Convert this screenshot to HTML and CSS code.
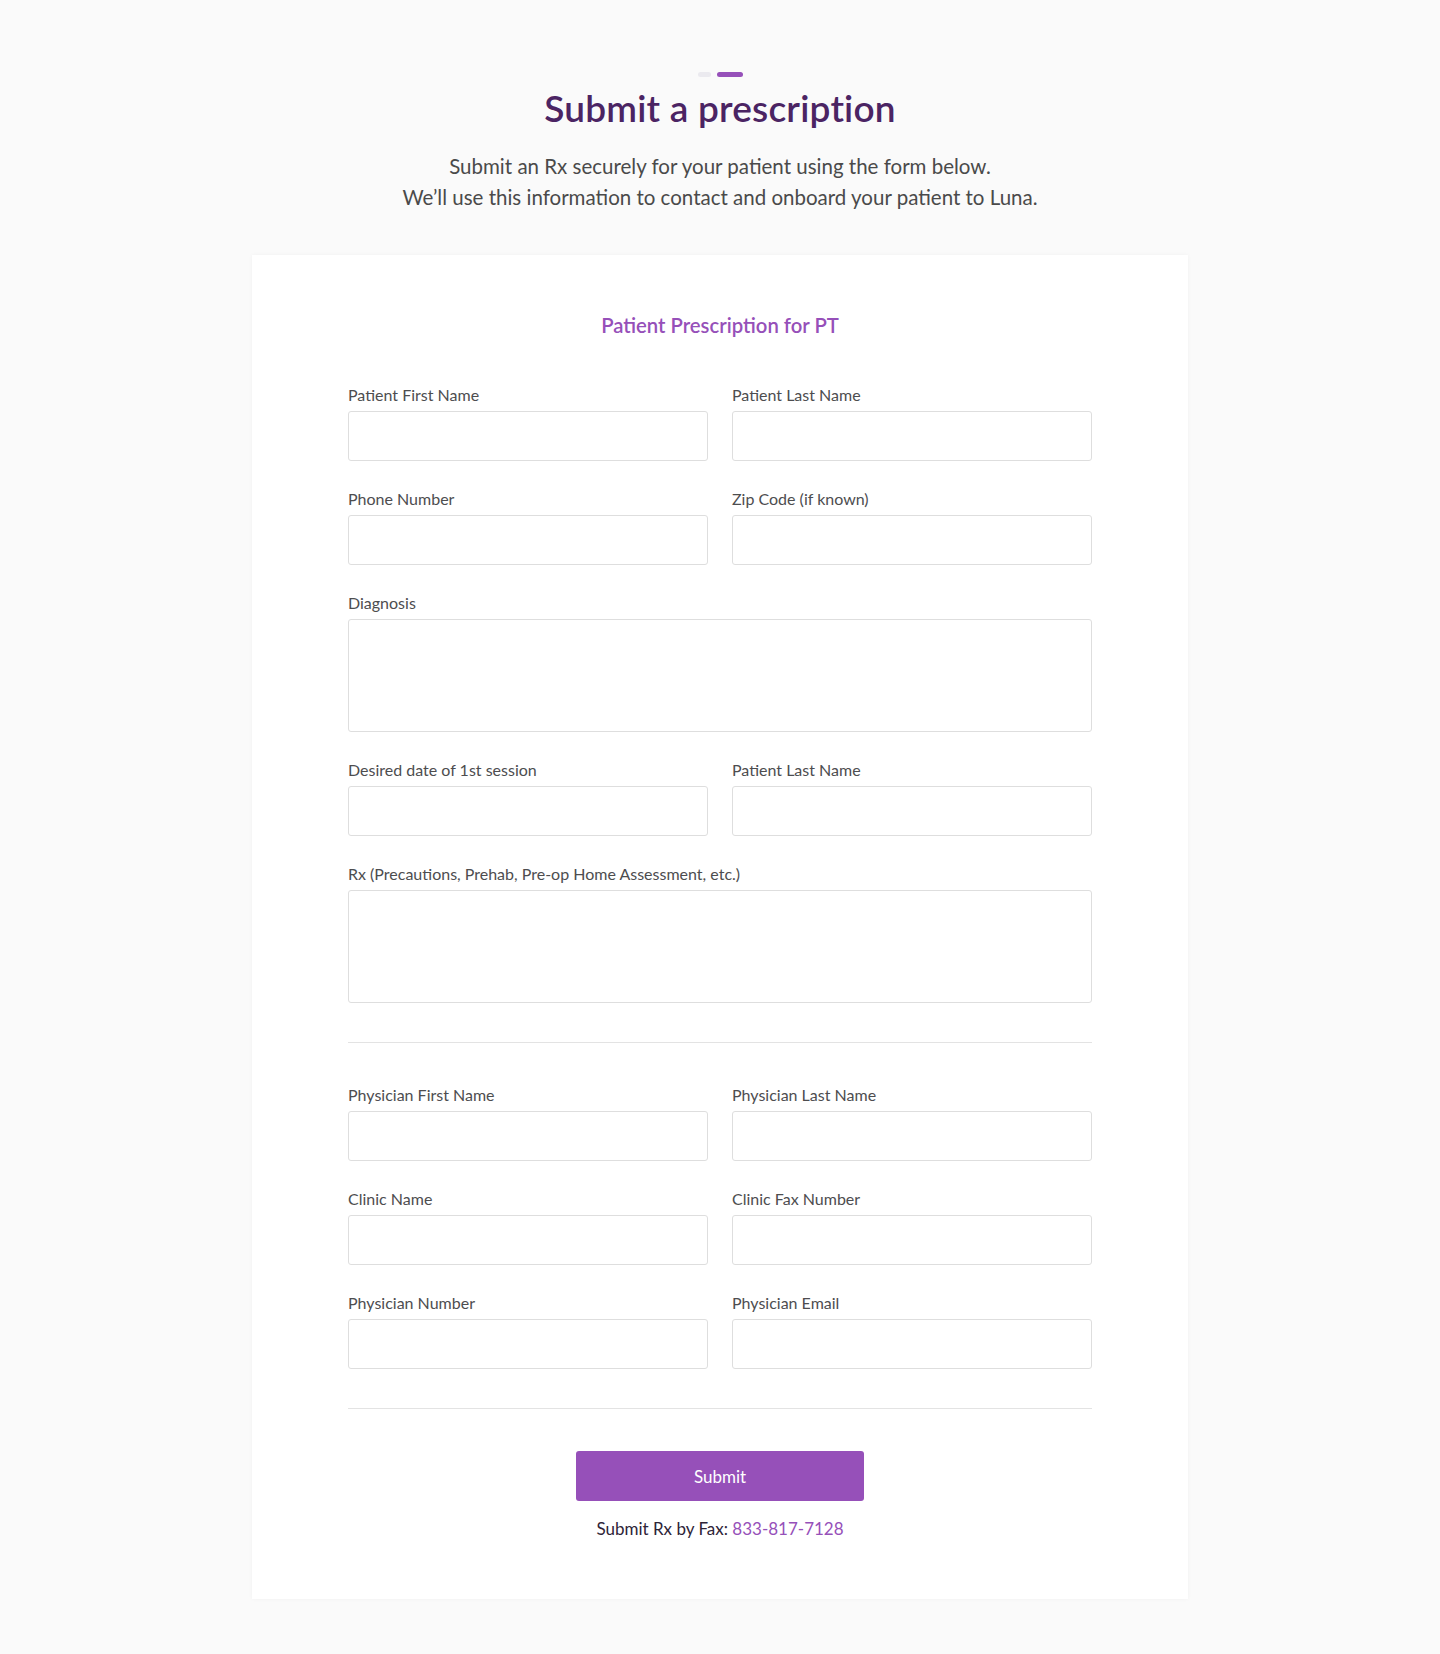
FILE: index.html
```html
<!DOCTYPE html>
<html lang="en">
<head>
<meta charset="utf-8">
<title>Submit a prescription</title>
<link rel="stylesheet" href="styles.css">
</head>
<body>
<main class="page">
  <header class="intro">
    <div class="steps"><span class="step"></span><span class="step step-active"></span></div>
    <h1 class="title">Submit a prescription</h1>
    <p class="lede">Submit an Rx securely for your patient using the form below.<br>We’ll use this information to contact and onboard your patient to Luna.</p>
  </header>
  <section class="card">
    <h2 class="card-title">Patient Prescription for PT</h2>
    <form class="form">
      <div class="grid">
        <label class="field"><span class="label">Patient First Name</span><input class="input" type="text"></label>
        <label class="field"><span class="label">Patient Last Name</span><input class="input" type="text"></label>
        <label class="field"><span class="label">Phone Number</span><input class="input" type="text"></label>
        <label class="field"><span class="label">Zip Code (if known)</span><input class="input" type="text"></label>
        <label class="field field-wide"><span class="label">Diagnosis</span><textarea class="input textarea"></textarea></label>
        <label class="field"><span class="label">Desired date of 1st session</span><input class="input" type="text"></label>
        <label class="field"><span class="label">Patient Last Name</span><input class="input" type="text"></label>
        <label class="field field-wide"><span class="label">Rx (Precautions, Prehab, Pre-op Home Assessment, etc.)</span><textarea class="input textarea"></textarea></label>
      </div>
      <hr class="divider">
      <div class="grid">
        <label class="field"><span class="label">Physician First Name</span><input class="input" type="text"></label>
        <label class="field"><span class="label">Physician Last Name</span><input class="input" type="text"></label>
        <label class="field"><span class="label">Clinic Name</span><input class="input" type="text"></label>
        <label class="field"><span class="label">Clinic Fax Number</span><input class="input" type="text"></label>
        <label class="field"><span class="label">Physician Number</span><input class="input" type="text"></label>
        <label class="field"><span class="label">Physician Email</span><input class="input" type="text"></label>
      </div>
      <hr class="divider">
      <div class="actions">
        <button class="submit" type="button">Submit</button>
        <p class="fax">Submit Rx by Fax: <a class="fax-link" href="#">833-817-7128</a></p>
      </div>
    </form>
  </section>
</main>
</body>
</html>
```

FILE: styles.css
```css
* { box-sizing: border-box; }
html, body { margin: 0; padding: 0; }
body {
  background: #fafafa;
  font-family: Lato, "Liberation Sans", Arial, sans-serif;
  color: #4a4a4a;
}
.page { padding: 72px 0 56px; }
.intro { text-align: center; }
.steps { display: flex; justify-content: center; gap: 6px; height: 5px; margin-left: 1px; }
.step { display: block; width: 13px; height: 5px; border-radius: 3px; background: #ebeaef; }
.step-active { width: 26px; background: #9650b9; }
.title {
  margin: 9px 0 0;
  font-size: 37px;
  line-height: 44px;
  font-weight: 600;
  color: #4b2463;
  letter-spacing: 0.2px;
}
.lede {
  margin: 21px 0 0;
  font-size: 20.5px;
  line-height: 31px;
  color: #4a4a4a;
}
.card {
  width: 936px;
  margin: 42px auto 0;
  background: #fff;
  box-shadow: 0 0 4px rgba(0, 0, 0, 0.04);
  padding: 56px 96px 58px;
}
.card-title {
  margin: 0;
  text-align: center;
  font-size: 20.3px;
  line-height: 28px;
  font-weight: 600;
  color: #9650b9;
}
.form { margin-top: 46px; }
.grid {
  display: grid;
  grid-template-columns: 1fr 1fr;
  column-gap: 24px;
  row-gap: 28px;
}
.field { display: flex; flex-direction: column; }
.field-wide { grid-column: 1 / -1; }
.label {
  font-size: 16px;
  line-height: 20px;
  margin-bottom: 6px;
  color: #4d4d4f;
}
.input {
  display: block;
  width: 100%;
  height: 50px;
  margin: 0;
  border: 1px solid #dedede;
  border-radius: 3px;
  background: #fff;
  font: inherit;
}
.textarea { height: 113px; resize: none; }
.divider { border: 0; border-top: 1px solid #e3e3e3; margin: 39px 0 42px; }
.actions { display: flex; flex-direction: column; align-items: center; }
.submit {
  width: 288px;
  height: 50px;
  border: 0;
  border-radius: 3px;
  background: #9650b9;
  color: #fff;
  font: inherit;
  font-size: 17px;
}
.fax { margin: 16px 0 0; font-size: 17px; line-height: 24px; color: #2e2438; }
.fax-link { color: #9650b9; text-decoration: none; }
```
